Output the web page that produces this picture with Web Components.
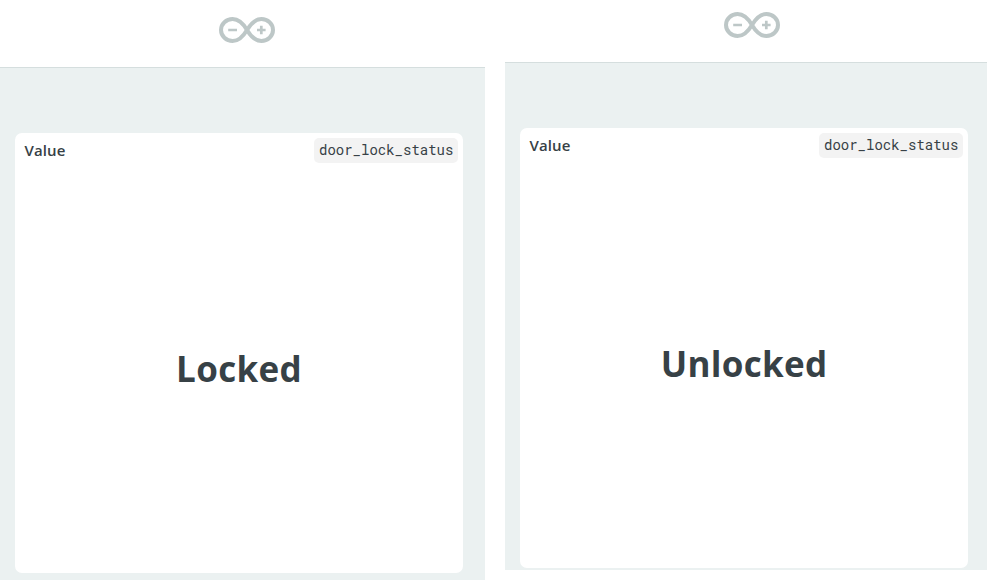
<!DOCTYPE html>
<html lang="en">
<head>
<meta charset="utf-8">
<title>Door lock status</title>
<style>
body { margin: 0; height: 580px; overflow: hidden; background: #fff; display: grid; grid-template-columns: 485px 482px; column-gap: 20px; align-items: start; font-family: "Open Sans", "Noto Sans", sans-serif; color: #374146; }
#locked { --header: 67px; --logo-start: 219px; height: 580px; }
#unlocked { --header: 62px; --logo-start: 219px; height: 570px; }
</style>
</head>
<body>
<lock-dashboard id="locked"><value-widget slot="widget" variable="door_lock_status">Locked</value-widget></lock-dashboard>
<lock-dashboard id="unlocked"><value-widget slot="widget" variable="door_lock_status">Unlocked</value-widget></lock-dashboard>
<script>
class InfinityLogo extends HTMLElement {
  constructor() {
    super();
    this.attachShadow({ mode: 'open' }).innerHTML = `
      <style>:host { display: block; width: 56px; height: 26px; } svg { display: block; }</style>
      <svg width="56" height="26" viewBox="0 0 56 26" fill="none" stroke="#bdc7c7">
        <path stroke-width="4" d="M28 13C24.6 7.2 20 2 13.6 2C7.2 2 2 6.8 2 13S7.2 24 13.6 24C20 24 24.6 18.8 28 13C31.4 7.2 36 2 42.4 2C48.8 2 54 6.8 54 13S48.8 24 42.4 24C36 24 31.4 18.8 28 13Z"/>
        <path stroke-width="2.7" d="M9.2 13H18M38 13H46.6M42.3 8.7V17.3"/>
      </svg>`;
  }
}
customElements.define('infinity-logo', InfinityLogo);

class ValueWidget extends HTMLElement {
  constructor() {
    super();
    this.attachShadow({ mode: 'open' }).innerHTML = `
      <style>
        :host { box-sizing: border-box; display: flex; flex-direction: column; width: 448px; height: 440px; border-radius: 7px; background: #fff; }
        header { box-sizing: border-box; display: flex; justify-content: space-between; height: 30px; padding: 5px 5px 0 9.5px; }
        .title { font-size: 15px; font-weight: 600; line-height: 24px; letter-spacing: .1px; }
        code { box-sizing: border-box; width: 144px; height: 25px; padding-left: 5px; border-radius: 5px; background: #f3f3f3; font: 14px/24px "Roboto Mono", "Liberation Mono", monospace; white-space: nowrap; }
        .value { flex: 1; display: flex; align-items: center; justify-content: center; padding-top: 1px; font-size: 35px; font-weight: 700; line-height: 48px; letter-spacing: .3px; }
      </style>
      <header><span class="title">Value</span><code></code></header>
      <div class="value"><slot></slot></div>`;
  }
  connectedCallback() {
    this.shadowRoot.querySelector('code').textContent = this.getAttribute('variable');
  }
}
customElements.define('value-widget', ValueWidget);

class LockDashboard extends HTMLElement {
  constructor() {
    super();
    this.attachShadow({ mode: 'open' }).innerHTML = `
      <style>
        :host { display: flex; flex-direction: column; overflow: hidden; background: #ebf1f1; }
        .bar { box-sizing: border-box; flex: none; height: calc(var(--header) + 1px); padding: 0 0 24px var(--logo-start); display: flex; align-items: flex-end; background: #fff; border-bottom: 1px solid #d5dede; }
        main { padding: 65px 0 0 15px; }
      </style>
      <div class="bar"><infinity-logo></infinity-logo></div>
      <main><slot name="widget"></slot></main>`;
  }
}
customElements.define('lock-dashboard', LockDashboard);
</script>
</body>
</html>
